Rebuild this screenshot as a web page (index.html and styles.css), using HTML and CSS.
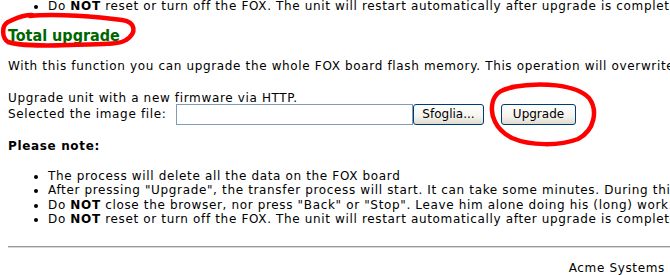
FILE: index.html
```html
<!DOCTYPE html>
<html lang="en">
<head>
  <meta charset="UTF-8" />
  <title>FOX Board - Total upgrade</title>
  <link rel="stylesheet" href="styles.css">
</head>
<body>
  <div class="page">
    <ul class="notes prev">
      <li>Do <b>NOT</b> reset or turn off the FOX. The unit will restart automatically after upgrade is complete.</li>
    </ul>

    <h2 class="section-title">Total upgrade</h2>
    <p class="intro">With this function you can upgrade the whole FOX board flash memory. This operation will overwrite all the data stored on the board.</p>

    <form class="upload" onsubmit="return false">
      <div class="upload-caption">Upgrade unit with a new firmware via HTTP.</div>
      <div class="upload-row">
        <label class="upload-label" for="imageFile">Selected the image file:</label>
        <input type="text" id="imageFile" class="file-path" />
        <button type="button" class="xp-btn browse-btn">Sfoglia...</button>
        <button type="submit" class="xp-btn upgrade-btn">Upgrade</button>
      </div>
    </form>

    <div class="note-title">Please note:</div>
    <ul class="notes">
      <li>The process will delete all the data on the FOX board</li>
      <li>After pressing "Upgrade", the transfer process will start. It can take some minutes. During this time the board is not reachable.</li>
      <li>Do <b>NOT</b> close the browser, nor press "Back" or "Stop". Leave him alone doing his (long) work.</li>
      <li>Do <b>NOT</b> reset or turn off the FOX. The unit will restart automatically after upgrade is complete.</li>
    </ul>

    <hr class="divider" />
    <div class="footer">Acme Systems</div>
  </div>

  <!-- red marker scribbles drawn over the page -->
  <svg class="marks" width="670" height="275" viewBox="0 0 670 275">
    <path d="M30,16 C55,13 100,17 122,20 C136,22 137,33 126,40 C119,45 100,44 70,45 C40,46 20,46 8,42 C2,38 1,26 8,22 C15,19 20,15 32,15" />
    <path d="M512,87 C540,82 576,84 589,98 C598,110 595,130 578,139 C560,146 530,146 512,138 C496,130 489,115 493,101 C496,92 503,89 514,87" />
  </svg>
</body>
</html>
```

FILE: styles.css
```css
html {
  overflow: hidden;
}

body {
  margin: 0;
  padding-left: 8px;
  font-family: "DejaVu Sans", Verdana, sans-serif;
  font-size: 12px;
  line-height: 14.5px;
  letter-spacing: 0.65px;
  color: #000;
  background-color: #fff;
  white-space: nowrap;
}

.page {
  width: 1100px;
}

.notes {
  margin: 0;
  padding-left: 40px;
}

.notes.prev {
  margin-top: -1.5px;
}

.section-title {
  margin: 14px 0 0;
  font-size: 16px;
  line-height: 18px;
  font-stretch: condensed;
  letter-spacing: 0;
  color: #006600;
}

.intro {
  margin: 14px 0 0;
}

.upload {
  margin-top: 17.5px;
}

.upload-row {
  display: flex;
  align-items: center;
  margin-top: -2px;
  height: 21px;
}

.upload-label {
  width: 168px;
}

.file-path {
  box-sizing: border-box;
  width: 237px;
  height: 21px;
  margin: 0;
  border: 1px solid #7f9db9;
  padding: 0 3px;
}

.xp-btn {
  box-sizing: border-box;
  height: 21px;
  margin: 0;
  padding: 0;
  border: 1px solid #003c74;
  border-radius: 3px;
  background: linear-gradient(#ffffff, #f4f3ee 60%, #dedbd0);
  font-family: "DejaVu Sans", Tahoma, sans-serif;
  font-size: 12px;
  letter-spacing: 0;
  color: #000;
  cursor: pointer;
}

.browse-btn {
  width: 71px;
}

.upgrade-btn {
  width: 75px;
  margin-left: 17px;
}

.note-title {
  margin-top: 14.5px;
  font-weight: bold;
}

.note-title + .notes {
  margin-top: 15px;
}

.divider {
  margin: 19px 0 0 0;
  height: 0;
  border: none;
  border-top: 1px solid #9a9a9a;
  border-bottom: 1px solid #d8d8d8;
}

.footer {
  width: 657px;
  margin-top: 13.5px;
  text-align: right;
}

.marks {
  position: absolute;
  left: 0;
  top: 0;
  pointer-events: none;
}

.marks path {
  fill: none;
  stroke: #ff0000;
  stroke-width: 4.5;
  stroke-linecap: round;
  stroke-linejoin: round;
}
```
